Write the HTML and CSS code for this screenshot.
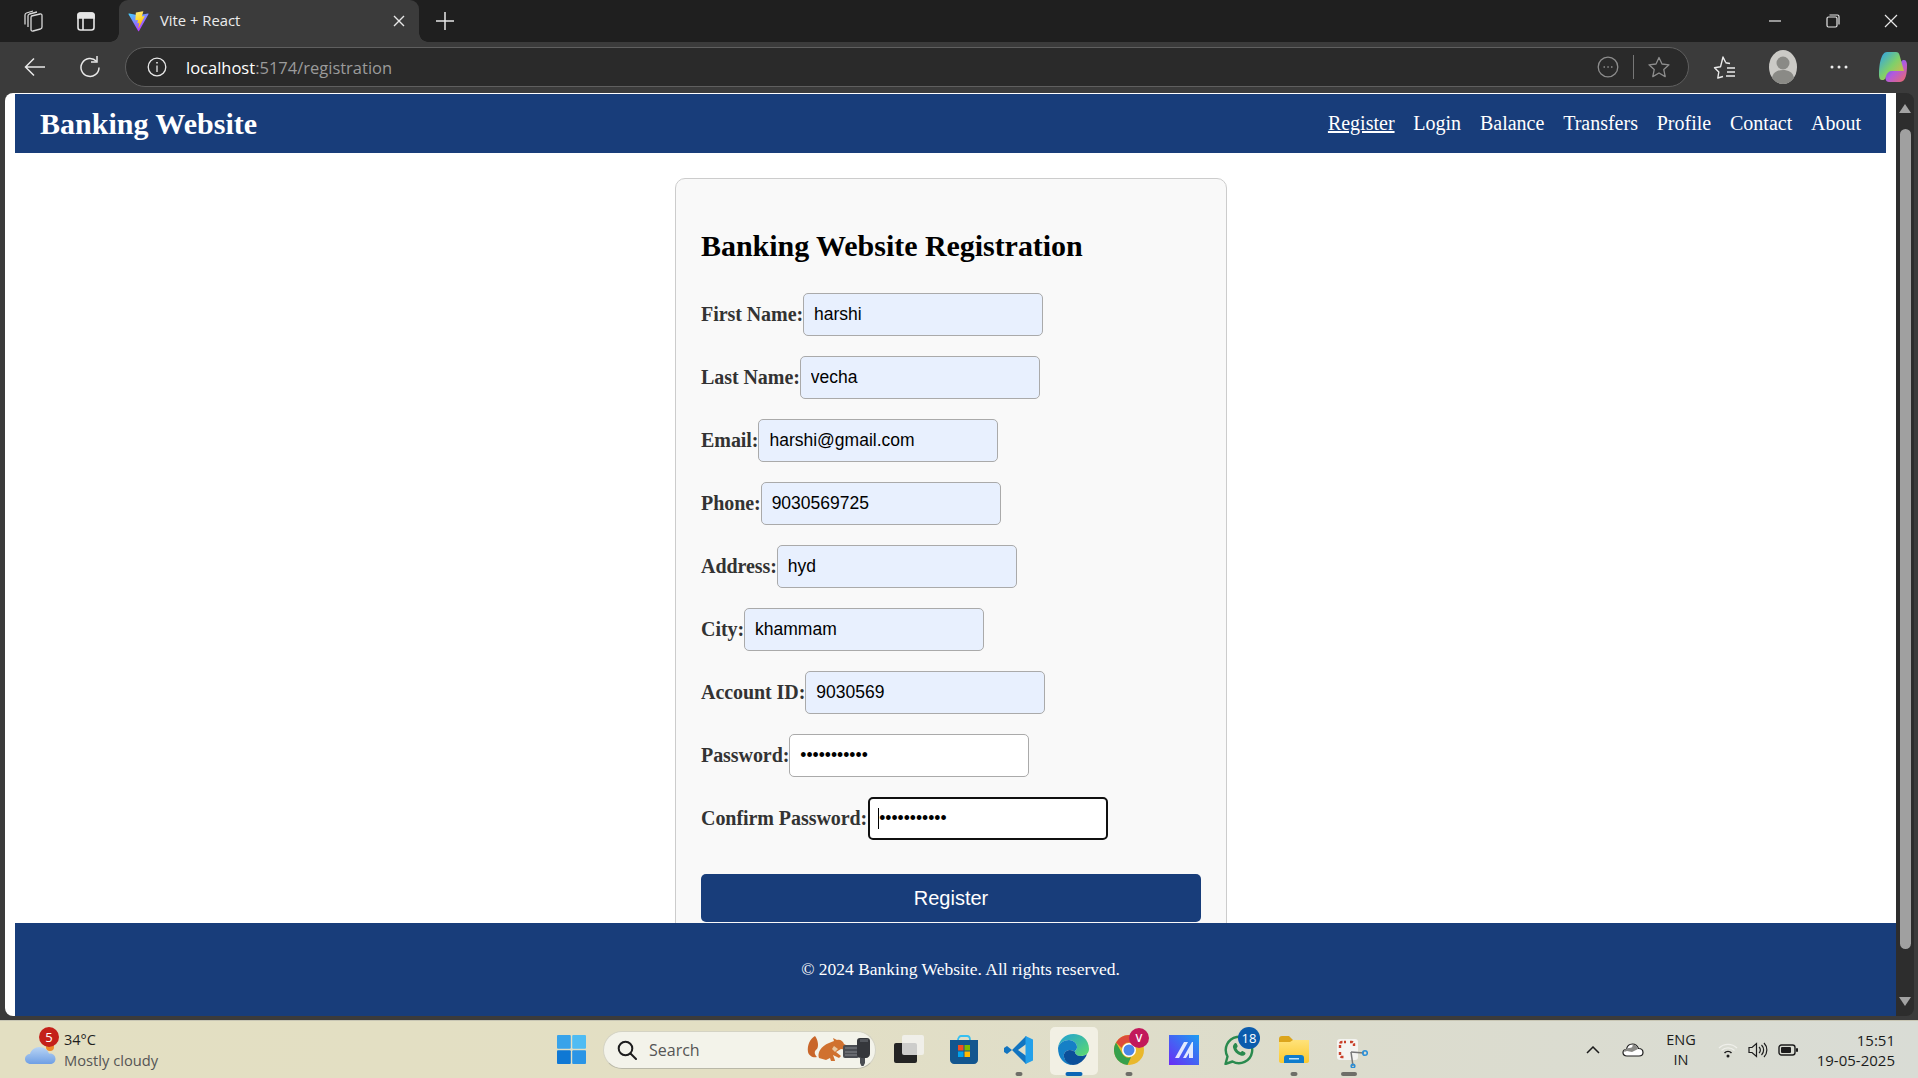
FILE: index.html
```html
<!DOCTYPE html>
<html lang="en">
<head>
<meta charset="utf-8">
<title>Vite + React</title>
<link rel="stylesheet" href="styles.css">
</head>
<body>
<svg class="defs" width="0" height="0" aria-hidden="true">
  <defs>
    <linearGradient id="viteA" x1="0" y1="0" x2="0.6" y2="1"><stop offset="0" stop-color="#41d1ff"/><stop offset="1" stop-color="#bd34fe"/></linearGradient>
    <linearGradient id="viteB" x1="0" y1="0" x2="0.3" y2="1"><stop offset="0" stop-color="#ffea83"/><stop offset="0.5" stop-color="#ffdd35"/><stop offset="1" stop-color="#ffa800"/></linearGradient>
    <linearGradient id="copA" x1="0" y1="0" x2="1" y2="1"><stop offset="0" stop-color="#2aa0f0"/><stop offset="0.5" stop-color="#7fd06a"/><stop offset="1" stop-color="#f0b040"/></linearGradient>
    <linearGradient id="copB" x1="0" y1="0" x2="1" y2="1"><stop offset="0" stop-color="#1e6fe0"/><stop offset="0.5" stop-color="#b05ae0"/><stop offset="1" stop-color="#f06a60"/></linearGradient>
    <linearGradient id="edgeA" x1="0" y1="0" x2="1" y2="1"><stop offset="0" stop-color="#1f9fd8"/><stop offset="1" stop-color="#5fdc6c"/></linearGradient>
    <linearGradient id="mA" x1="0" y1="1" x2="1" y2="0"><stop offset="0" stop-color="#6a2cf5"/><stop offset="1" stop-color="#1c9df2"/></linearGradient>
    <linearGradient id="cloudA" x1="0" y1="0" x2="0" y2="1"><stop offset="0" stop-color="#b8d4f4"/><stop offset="1" stop-color="#6f9fe4"/></linearGradient>
    <linearGradient id="folderA" x1="0" y1="0" x2="0" y2="1"><stop offset="0" stop-color="#ffe27a"/><stop offset="1" stop-color="#fbc92f"/></linearGradient>
  </defs>
</svg>

<header class="titlebar">
  <div class="tb-btn tb-btn-first">
    <svg width="24" height="24" viewBox="0 0 24 24" fill="none" stroke="#d8d8d8" stroke-width="1.300" stroke-linejoin="round"><path d="M10.500 7 19 5q2-.3 2 1.500V18q0 1.500-1.500 2L12 22q-2 .3-2-1.500V9q0-1.500.5-2Z"/><path d="M7 18V7q0-1.500 1.500-2L16 3"/><path d="M4 15.500V6q0-1.500 1.500-2L12 2"/></svg>
  </div>
  <div class="tb-btn">
    <svg width="20" height="22" viewBox="0 0 20 22" fill="none" stroke="#e6e6e6" stroke-width="1.600"><rect x="2" y="3" width="16" height="17" rx="2.500"/><path d="M7 8v12"/><path d="M2 8h16V5.500A2.500 2.500 0 0 0 15.500 3h-11A2.500 2.500 0 0 0 2 5.500Z" fill="#e6e6e6"/></svg>
  </div>
  <div class="tab">
    <svg class="fav" width="21" height="21" viewBox="0 0 410 404"><path fill="url(#viteA)" d="M399.641 59.5246L215.643 388.545C211.844 395.338 202.084 395.378 198.228 388.618L10.5817 59.5563C6.38087 52.1896 12.6802 43.2665 21.0281 44.7586L205.223 77.6824C206.398 77.8924 207.601 77.8904 208.776 77.6763L389.119 44.8058C397.439 43.2894 403.768 52.1434 399.641 59.5246Z"/><path fill="url(#viteB)" d="M292.965 1.5744L156.801 28.2552C154.563 28.6937 152.906 30.5903 152.771 32.8664L144.395 174.33C144.198 177.662 147.258 180.248 150.51 179.498L188.42 170.749C191.967 169.931 195.172 173.055 194.443 176.622L183.18 231.775C182.422 235.487 185.907 238.661 189.532 237.56L212.947 230.446C216.577 229.344 220.065 232.527 219.297 236.242L201.398 322.875C200.278 328.294 207.486 331.249 210.492 326.603L212.5 323.5L323.454 102.072C325.312 98.3645 322.108 94.137 318.036 94.9228L279.014 102.454C275.347 103.161 272.227 99.746 273.262 96.1583L298.731 7.86689C299.767 4.27314 296.636 0.855181 292.965 1.5744Z"/></svg>
    <span class="tab-title">Vite + React</span>
    <svg class="tab-close" width="12" height="12" viewBox="0 0 12 12" stroke="#e8e8e8" stroke-width="1.400"><path d="M1 1l10 10M11 1 1 11"/></svg>
  </div>
  <svg class="new-tab" width="18" height="18" viewBox="0 0 18 18" stroke="#e8e8e8" stroke-width="1.500"><path d="M9 0v18M0 9h18"/></svg>
  <div class="win-controls">
    <svg width="14" height="14" viewBox="0 0 14 14" stroke="#e8e8e8" stroke-width="1.200"><path d="M1 7h12"/></svg>
    <svg width="14" height="14" viewBox="0 0 14 14" fill="none" stroke="#e8e8e8" stroke-width="1.200"><rect x="1" y="3" width="10" height="10" rx="1.500"/><path d="M3.500 1H11.500A1.500 1.500 0 0 1 13 2.500V10.500"/></svg>
    <svg width="14" height="14" viewBox="0 0 14 14" stroke="#e8e8e8" stroke-width="1.200"><path d="M1 1l12 12M13 1 1 13"/></svg>
  </div>
</header>

<div class="toolbar">
  <svg class="tool-back" width="22" height="20" viewBox="0 0 22 20" fill="none" stroke="#e8e8e8" stroke-width="1.500"><path d="M21 10H1.500M10 1.500 1.500 10l8.500 8.500"/></svg>
  <svg class="tool-reload" width="22" height="24" viewBox="0 0 22 24" fill="none" stroke="#e8e8e8" stroke-width="1.500"><path d="M17.500 6.200A9 9 0 1 0 20 12.500"/><path d="M18 1v6h-6"/></svg>
  <div class="address">
    <svg class="addr-info" width="20" height="20" viewBox="0 0 20 20" fill="none" stroke="#e8e8e8" stroke-width="1.300"><circle cx="10" cy="10" r="8.800"/><path d="M10 8.500v6.500"/><path d="M10 5v1.600" stroke-width="1.600"/></svg>
    <span class="url"><span class="url-host">localhost</span>:5174/registration</span>
    <svg class="addr-more" width="22" height="22" viewBox="0 0 22 22" fill="none" stroke="#8d8d8d" stroke-width="1.300"><circle cx="11" cy="11" r="9.800"/><path d="M6.500 11h1.500M10.300 11h1.500M14 11h1.500" stroke-width="1.600"/></svg>
    <span class="addr-sep"></span>
    <svg class="addr-star" width="22" height="22" viewBox="0 0 22 22" fill="none" stroke="#8d8d8d" stroke-width="1.300"><path d="M11 1.500 14 8l7 .8-5.200 4.800 1.400 7L11 17l-6.200 3.600 1.400-7L1 8.800 8 8Z" stroke-linejoin="round"/></svg>
  </div>
  <svg class="tool-fav" width="24" height="24" viewBox="0 0 24 24" fill="none" stroke="#ececec" stroke-width="1.400"><path d="M10 21.500 4.800 23l1-6-4.300-4.300 6-.9L10 2l2.700 5.500" stroke-linejoin="round"/><path d="M12.500 7.800 17 8.500M14 13h8M14 17h8M13 21h9"/></svg>
  <svg class="tool-avatar" width="30" height="34" viewBox="0 0 30 34"><ellipse cx="15" cy="17" rx="14" ry="17" fill="#cbcac6"/><circle cx="15" cy="13" r="6.500" fill="#8a8a86"/><path d="M4 28c1-6 6-8 11-8s10 2 11 8c-3 4-7 6-11 6s-8-2-11-6Z" fill="#8a8a86"/></svg>
  <svg class="tool-dots" width="18" height="4" viewBox="0 0 18 4" fill="#ececec"><circle cx="2" cy="2" r="1.500"/><circle cx="9" cy="2" r="1.500"/><circle cx="16" cy="2" r="1.500"/></svg>
  <svg class="tool-copilot" width="30" height="32" viewBox="0 0 30 32"><path fill="url(#copB)" d="M22 31H11c-2 0-3-1-3.500-3L6 20h11c3 0 4-2 5-5l1-4c1-2 2-2 3-2 2 0 3 2 3 5 0 8-1 17-7 17Z"/><path fill="url(#copA)" d="M9 1h9c2 0 3 1 3.500 3L26 20H14c-3 0-5 2-6 5l-1 3c-1 1-2 1-3 1-2 0-3-2-3-5C1 14 3 1 9 1Z"/><path fill="#2d2d2d" opacity=".0" d="M0 0h1v1H0Z"/></svg>
</div>

<div class="viewport">
  <div class="page">
    <nav class="navbar">
      <span class="brand">Banking Website</span>
      <div class="nav-links">
        <a class="nav-link nav-active">Register</a>
        <a class="nav-link">Login</a>
        <a class="nav-link">Balance</a>
        <a class="nav-link">Transfers</a>
        <a class="nav-link">Profile</a>
        <a class="nav-link">Contact</a>
        <a class="nav-link">About</a>
      </div>
    </nav>
    <main class="main">
      <form class="card">
        <h2 class="card-title">Banking Website Registration</h2>
        <div class="row"><label class="label">First Name:</label><input class="input filled" value="harshi"></div>
        <div class="row"><label class="label">Last Name:</label><input class="input filled" value="vecha"></div>
        <div class="row"><label class="label">Email:</label><input class="input filled" value="harshi@gmail.com"></div>
        <div class="row"><label class="label">Phone:</label><input class="input filled" value="9030569725"></div>
        <div class="row"><label class="label">Address:</label><input class="input filled" value="hyd"></div>
        <div class="row"><label class="label">City:</label><input class="input filled" value="khammam"></div>
        <div class="row"><label class="label">Account ID:</label><input class="input filled" value="9030569"></div>
        <div class="row"><label class="label">Password:</label><input class="input" type="password" value="harshi12345"></div>
        <div class="row"><label class="label">Confirm Password:</label><span class="focus-wrap"><input class="input focused" type="password" value="harshi12345"><span class="caret"></span></span></div>
        <button class="submit" type="button">Register</button>
      </form>
    </main>
    <footer class="footer"><p class="footer-text">© 2024 Banking Website. All rights reserved.</p></footer>
  </div>
  <div class="scrollbar">
    <svg class="sb-up" width="12" height="9" viewBox="0 0 12 9" fill="#a3a3a3"><path d="M6 0l6 9H0Z"/></svg>
    <div class="sb-thumb"></div>
    <svg class="sb-down" width="12" height="9" viewBox="0 0 12 9" fill="#a3a3a3"><path d="M0 0h12L6 9Z"/></svg>
  </div>
</div>

<div class="taskbar">
  <div class="weather">
    <svg class="weather-icon" width="31" height="22" viewBox="0 0 31 22"><circle cx="25" cy="4" r="4" fill="#ef8a2a"/><path fill="url(#cloudA)" d="M6 21C2 21 0 18.500 0 16c0-3 2.500-5 5-5 1-4 5-7 9.500-7 5 0 8 3 9.500 6.500h1c3.500 0 5.500 2.500 5.500 5.500S28 21 25 21Z"/></svg>
    <span class="weather-badge">5</span>
    <div class="weather-text"><span class="weather-temp">34°C</span><span class="weather-desc">Mostly cloudy</span></div>
  </div>
  <div class="task-start">
    <svg width="29" height="29" viewBox="0 0 29 29"><rect x="0" y="0" width="13.800" height="13.800" rx="1" fill="#38a3ea"/><rect x="15.200" y="0" width="13.800" height="13.800" rx="1" fill="#4fbcf3"/><rect x="0" y="15.200" width="13.800" height="13.800" rx="1" fill="#0f78d4"/><rect x="15.200" y="15.200" width="13.800" height="13.800" rx="1" fill="#2a95e6"/></svg>
  </div>
  <div class="search">
    <svg class="search-icon" width="20" height="20" viewBox="0 0 20 20" fill="none" stroke="#1d1d1d" stroke-width="2"><circle cx="8.500" cy="8.500" r="6.800"/><path d="M13.500 13.500 19 19" stroke-linecap="round"/></svg>
    <span class="search-text">Search</span>
    <svg class="search-art" width="64" height="32" viewBox="0 0 64 32">
      <path fill="#c9662a" d="M8 2C3 5 0 11 1 18c1 4 5 6 9 5-3-3-3-6 0-8 2-3 1-9-2-13Z"/>
      <path fill="#d0712f" d="M12 24c-2-5 2-12 10-15l5-2-1-3 4 2c3-1 6 1 7 4l6 3-2 3-7-1-5 3 5 4-2 2-6-3c1 3 2 5 2 6h-4l-1-3-4 2Z"/>
      <path fill="#e9c7a0" d="M27 12l4 3-3 3-3-3Z"/>
      <rect x="36" y="11" width="16" height="13" rx="2" fill="#4a4d52"/>
      <path d="M38 14h13M38 18h13M38 21h13" stroke="#85888c" stroke-width="1"/>
      <path fill="#35373b" d="M50 7c0-2 1-3 3-3h7c2 0 3 1 3 3v13c0 2-2 4-4 4h-5c-2 0-4-1-4-3Z"/>
      <path fill="#53565b" d="M53 5h8v3h-8Z"/>
      <path fill="#4a4d52" d="M53 24h5v5l-1.500 3h-2L53 29Z"/>
    </svg>
  </div>
  <div class="task">
    <svg width="30" height="30" viewBox="0 0 30 30"><rect x="0" y="8" width="23" height="20" rx="2" fill="#242424"/><rect x="8" y="0" width="22" height="20" rx="2" fill="#f3f3f0" opacity=".82"/></svg>
  </div>
  <div class="task">
    <svg width="30" height="30" viewBox="0 0 30 30"><path d="M9 5c0-2.500 2-4 3-4h6c2 0 3 1.500 3 4" fill="none" stroke="#36c0f2" stroke-width="1.800"/><path fill="#13568f" d="M1 5h28v20c0 2-2 4-4 4H5c-2 0-4-2-4-4Z"/><rect x="9" y="10" width="5.500" height="5.500" fill="#f25022"/><rect x="15.500" y="10" width="5.500" height="5.500" fill="#7fba00"/><rect x="9" y="16.500" width="5.500" height="5.500" fill="#00a4ef"/><rect x="15.500" y="16.500" width="5.500" height="5.500" fill="#ffb900"/></svg>
  </div>
  <div class="task has-dot">
    <svg width="30" height="30" viewBox="0 0 30 30"><path fill="#1274c0" d="M22 1 8 15l-5-4-3 2v4l3 2 5-4 14 14 3-6-11-8 11-8Z"/><path fill="#23a0ea" d="M21.500 1 29 4.500v21L21.500 29Z"/><path fill="#0f6fb8" d="M21.500 8 12 15l9.500 7Z" opacity="0"/></svg>
  </div>
  <div class="task task-active has-bar">
    <svg width="31" height="31" viewBox="0 0 31 31"><path fill="url(#edgeA)" d="M15.500 0C23 0 31 5 31 15c0 4-3 7-8 7-3 0-6-1.500-6-4 0-2 2-2 2-5 0-4-4-7-8-7C6 6 1 9 0 14 1 6 7 0 15.500 0Z"/><path fill="#1580c6" d="M0 14c1-5 6-8 11-8 4 0 8 3 8 7 0 3-2 3-2 5-3-3-9-3-11 2-1 4 2 9 9 11C6 31 0 24 0 14Z"/><path fill="#0b4f99" d="M6 20c2-5 8-5 11-2 0 2.500 3 4 6 4 2 0 4-.5 6-2-2 6-8 11-14 11-7-1-10-7-9-11Z"/></svg>
  </div>
  <div class="task has-dot">
    <svg width="30" height="30" viewBox="0 0 30 30"><circle cx="15" cy="15" r="15" fill="#e9b82c"/><path fill="#dd4b39" d="M15 0a15 15 0 0 1 13 7.500H15A7.500 7.500 0 0 0 7.800 13L2 7.500A15 15 0 0 1 15 0Z"/><path fill="#36a04c" d="M2 7.500 8.500 19A7.500 7.500 0 0 0 17 22.300L13.500 30A15 15 0 0 1 2 7.500Z"/><circle cx="15" cy="15" r="7" fill="#fff"/><circle cx="15" cy="15" r="5.500" fill="#4a86e8"/></svg>
    <span class="badge badge-v">V</span>
  </div>
  <div class="task">
    <svg width="30" height="30" viewBox="0 0 30 30"><rect width="30" height="30" fill="url(#mA)"/><path fill="#fff" opacity=".85" d="M6 23 15 7h4L10 23ZM14 23l9-16h1v16h-4v-5l-3 5Z"/></svg>
  </div>
  <div class="task">
    <svg width="30" height="30" viewBox="0 0 30 30" fill="none"><path d="M1.500 29l2-7.500A13.200 13.200 0 1 1 8.500 26.500Z" stroke="#2a8a4e" stroke-width="2.400" stroke-linejoin="round"/><path fill="#2a8a4e" d="M10.500 8.500c1-.8 1.800-.5 2.300.5l.8 1.800c.2.600 0 1-.4 1.500l-.7.900c.8 1.800 2.200 3.200 4 4l1-.8c.5-.4 1-.5 1.500-.2l1.800 1c.8.500 1 1.200.3 2.200-1 1.300-2.600 1.800-4.400 1.200-4-1.300-6.800-4.300-7.700-8-.3-1.500.3-3 1.500-4.100Z"/></svg>
    <span class="badge badge-wa">18</span>
  </div>
  <div class="task has-dot">
    <svg width="30" height="27" viewBox="0 0 30 27"><path fill="#dca51c" d="M0 3c0-2 1-3 3-3h7l4 4h14v6H0Z"/><path fill="url(#folderA)" d="M0 6h11l3-2h16v21c0 1-1 2-2 2H2c-1 0-2-1-2-2Z"/><path fill="#0f7ccc" d="M5 27v-5c0-2 1-3 3-3h14c2 0 3 1 3 3v5Z"/><rect x="10" y="22" width="10" height="1.500" fill="#bfe3fa"/></svg>
  </div>
  <div class="task has-wide-dot">
    <svg class="snip" width="32" height="30" viewBox="0 0 32 30" fill="none"><rect x="1" y="1" width="21" height="21" rx="3" fill="#f4f4f1"/><path d="M4 10V6c0-1 1-2 2-2h4M14 4h2c1 0 2 1 2 2v2M4 14v3c0 1 1 2 2 2h2" stroke="#c9402a" stroke-width="2.400" stroke-dasharray="3 1.500"/><path d="M15 14 28 15" stroke="#777" stroke-width="1.500"/><path d="M15 14 17 28" stroke="#777" stroke-width="1.500"/><circle cx="29" cy="15" r="2.300" stroke="#2a8fd8" stroke-width="1.600"/><circle cx="17" cy="28" r="1.800" stroke="#2a8fd8" stroke-width="1.600"/></svg>
  </div>
  <div class="tray">
    <svg class="tray-chev" width="14" height="8" viewBox="0 0 14 8" fill="none" stroke="#1c1c1c" stroke-width="1.500"><path d="M1 7l6-6 6 6"/></svg>
    <svg class="tray-cloud" width="22" height="14" viewBox="0 0 22 14"><path fill="#fff" stroke="#1c1c1c" stroke-width="1.200" d="M5 13C2.500 13 1 11.500 1 9.500S2.500 6.500 4.500 6.500C5 3 7.500 1 10.500 1c3 0 5 2 6 4.500 2.500 0 4.500 1.500 4.500 4S19 13 17 13Z"/><path fill="#8a8a86" d="M2 9C3 6 5 5 7 5c3 0 4-1 3.500-3.500C13 1.500 15.500 3 16 6L10 9 5 8Z"/></svg>
    <div class="tray-lang"><span>ENG</span><span>IN</span></div>
    <svg class="tray-wifi" width="20" height="16" viewBox="0 0 20 16" fill="none" stroke="#fff" stroke-width="1.300"><path d="M1 6a13 13 0 0 1 18 0" stroke="#efefea"/><path d="M3.500 8.500a9.500 9.500 0 0 1 13 0" stroke="#efefea"/><path d="M6.500 11a5 5 0 0 1 7 0" stroke="#1c1c1c" stroke-width="1.500"/><circle cx="10" cy="14" r="1.500" fill="#1c1c1c" stroke="none"/></svg>
    <svg class="tray-sound" width="20" height="16" viewBox="0 0 20 16" fill="none" stroke="#1c1c1c" stroke-width="1.200"><path d="M1 5.500h3L8.500 1.500v13L4 10.500H1Z"/><path d="M11 5a4 4 0 0 1 0 6M13.500 3a7 7 0 0 1 0 10M16 1a10 10 0 0 1 0 14"/></svg>
    <svg class="tray-batt" width="20" height="12" viewBox="0 0 20 12"><rect x="1" y="1" width="16" height="10" rx="2.500" fill="none" stroke="#1c1c1c" stroke-width="1.400"/><rect x="3" y="3" width="10" height="6" rx="1" fill="#1c1c1c"/><rect x="18" y="4" width="2" height="4" rx="1" fill="#1c1c1c"/></svg>
    <div class="tray-clock"><span>15:51</span><span>19-05-2025</span></div>
  </div>
</div>
</body>
</html>
```

FILE: styles.css
```css
* { box-sizing: border-box; }
html, body { margin: 0; height: 100%; }
body {
  width: 1918px;
  height: 1078px;
  overflow: hidden;
  display: flex;
  flex-direction: column;
  background: #3b3b3b;
  font-family: "Open Sans", "Noto Sans", sans-serif;
}
.defs { position: absolute; }

/* browser chrome */
.titlebar {
  height: 42px;
  flex: none;
  background: #1f1f1f;
  display: flex;
  align-items: center;
}
.tb-btn { width: 53px; display: flex; justify-content: center; flex: none; }
.tb-btn-first { margin-left: 6px; }
.tab {
  position: relative;
  width: 300px;
  height: 42px;
  margin-left: 7px;
  flex: none;
  background: #3b3b3b;
  border-radius: 9px 9px 0 0;
  display: flex;
  align-items: center;
  padding: 0 14px 0 9px;
}
.tab::before, .tab::after {
  content: "";
  position: absolute;
  bottom: 0;
  width: 9px;
  height: 9px;
}
.tab::before { left: -9px; background: radial-gradient(circle at 0 0, #1f1f1f 8.500px, #3b3b3b 9px); }
.tab::after { right: -9px; background: radial-gradient(circle at 100% 0, #1f1f1f 8.500px, #3b3b3b 9px); }
.fav { flex: none; }
.tab-title { margin-left: 11px; margin-bottom: 2px; font-size: 14.800px; color: #ececec; flex: 1; }
.new-tab { margin-left: 17px; flex: none; }
.win-controls {
  margin-left: auto;
  margin-right: 20px;
  display: flex;
  gap: 44px;
}
.toolbar {
  height: 51px;
  flex: none;
  background: #3b3b3b;
  display: flex;
  align-items: center;
  padding-bottom: 1px;
}
.tool-back { margin-left: 24px; flex: none; }
.tool-reload { margin-left: 33px; flex: none; }
.address {
  width: 1564px;
  height: 40px;
  margin-left: 24px;
  flex: none;
  background: #2a2a2a;
  border: 1.500px solid #5f5f5f;
  border-radius: 20px;
  display: flex;
  align-items: center;
  padding-left: 21px;
}
.addr-info { flex: none; }
.url { margin-left: 19px; font-size: 16.500px; color: #9b9b9b; flex: 1; }
.url-host { color: #fff; }
.addr-more { flex: none; }
.addr-sep { width: 1.500px; height: 24px; background: #777; margin: 0 14px 0 14px; flex: none; }
.addr-star { flex: none; margin-right: 18px; }
.tool-fav { margin-left: 24px; flex: none; }
.tool-avatar { margin-left: 31px; flex: none; }
.tool-dots { margin-left: 32px; flex: none; }
.tool-copilot { margin-left: 30px; flex: none; }

/* page */
.viewport {
  height: 923px;
  flex: none;
  display: flex;
  padding-left: 5px;
  padding-right: 4px;
}
.page {
  flex: 1;
  min-width: 0;
  background: #fff;
  border-radius: 8px 0 0 8px;
  overflow: hidden;
  display: flex;
  flex-direction: column;
  padding: 1px 0 0 10px;
  font-family: "Liberation Serif", "Times New Roman", serif;
}
.navbar {
  height: 59px;
  flex: none;
  margin-right: 10px;
  background: #183d7a;
  color: #fff;
  display: flex;
  align-items: center;
  justify-content: space-between;
  padding: 0 25px;
}
.brand { font-size: 30px; font-weight: 700; }
.nav-links { display: flex; gap: 18.800px; }
.nav-link { font-size: 20px; color: #fff; }
.nav-active { text-decoration: underline; }
.main {
  flex: 1;
  min-height: 0;
  overflow: hidden;
  padding: 25px 0 0 660px;
}
.card {
  width: 552px;
  min-height: 800px;
  background: #f9f9f9;
  border: 1px solid #ccc;
  border-radius: 10px;
  padding: 25px;
}
.card-title {
  margin: 25px 0 30px;
  font-size: 30px;
  line-height: 34px;
  font-weight: 700;
  color: #000;
  letter-spacing: -0.04px;
}
.row { display: flex; align-items: center; height: 43px; margin-bottom: 20px; }
.label { font-size: 20px; font-weight: 700; color: #333; white-space: nowrap; letter-spacing: -0.06px; }
.input {
  width: 240px;
  height: 43px;
  padding: 10px;
  border: 1px solid #aaa;
  border-radius: 5px;
  background: #fff;
  color: #000;
  font-family: "Liberation Sans", Arial, sans-serif;
  font-size: 17.500px;
  outline: none;
}
.filled { background: #e8f0fe; }
.focus-wrap { position: relative; display: block; height: 43px; margin-left: 1px; }
.focused { border: 2.500px solid #101010; padding: 10px 9px; }
.caret {
  position: absolute;
  left: 10px;
  top: 11px;
  width: 1px;
  height: 21px;
  background: #000;
}
.submit {
  display: block;
  width: 100%;
  height: 48px;
  margin-top: 34px;
  border: 0;
  border-radius: 5px;
  background: #183d7a;
  color: #fff;
  font-family: "Liberation Sans", Arial, sans-serif;
  font-size: 20px;
}
.footer {
  height: 93px;
  flex: none;
  background: #183d7a;
  display: flex;
  align-items: center;
  justify-content: center;
  padding-left: 10px;
}
.footer-text { margin: 0; font-size: 17.500px; color: #fff; }

/* scrollbar */
.scrollbar {
  width: 18px;
  flex: none;
  background: #2d2d2d;
  border-radius: 0 8px 8px 0;
  display: flex;
  flex-direction: column;
  align-items: center;
  padding-top: 11px;
}
.sb-thumb {
  width: 11px;
  height: 820px;
  margin: 16px 0 48px;
  background: #a0a0a0;
  border-radius: 6px;
  flex: none;
}
.sb-up, .sb-down { flex: none; }

/* taskbar */
.taskbar {
  margin-top: 4px;
  height: 58px;
  flex: none;
  background: linear-gradient(90deg, #e3dfc2 0%, #e3dfc4 40%, #dcdccd 70%, #d9dcd5 100%);
  border-top: 1px solid #c8c6b4;
  display: flex;
  align-items: center;
  color: #1c1c1c;
}
.weather {
  position: relative;
  width: 544px;
  flex: none;
  padding-left: 25px;
  display: flex;
  align-items: center;
  gap: 8px;
}
.weather-icon { flex: none; margin-top: 9px; }
.weather-badge {
  position: absolute;
  left: 39px;
  top: -3px;
  width: 20px;
  height: 20px;
  border-radius: 50%;
  background: #c4201a;
  color: #fff;
  font-size: 13px;
  line-height: 20px;
  text-align: center;
}
.weather-text { display: flex; flex-direction: column; }
.weather-temp { font-size: 14.500px; line-height: 20px; color: #1f1f1f; }
.weather-desc { font-size: 14.700px; line-height: 20px; color: #555; }
.task-start { width: 55px; flex: none; display: flex; justify-content: center; }
.search {
  width: 273px;
  height: 38px;
  margin-left: 4px;
  margin-right: 5px;
  flex: none;
  background: #f3f3ea;
  border: 1px solid #d4d3c4;
  border-bottom-color: #b9b8a8;
  border-radius: 19px;
  display: flex;
  align-items: center;
  padding-left: 13px;
}
.search-icon { flex: none; }
.search-text { margin-left: 12px; font-size: 16px; color: #555; }
.search-art { margin-left: auto; margin-right: 4px; flex: none; }
.task {
  position: relative;
  width: 55px;
  height: 58px;
  flex: none;
  display: flex;
  align-items: center;
  justify-content: center;
}
.task-active::before {
  content: "";
  position: absolute;
  left: 3.500px;
  top: 6px;
  width: 48px;
  height: 48px;
  background: #f2f0e4;
  border-radius: 5px;
}
.task-active svg { position: relative; }
.has-dot::after, .has-wide-dot::after, .has-bar::after {
  content: "";
  position: absolute;
  bottom: 3px;
  left: 50%;
  transform: translateX(-50%);
  width: 7px;
  height: 4px;
  border-radius: 2px;
  background: #6e6e68;
}
.has-wide-dot::after { width: 16px; }
.has-bar::after { width: 17px; bottom: 3px; background: #0a66b5; }
.snip { margin-top: 6px; margin-left: 6px; }
.badge {
  position: absolute;
  border-radius: 50%;
  color: #fff;
  text-align: center;
}
.badge-v {
  left: 28px;
  top: 7px;
  width: 20px;
  height: 20px;
  line-height: 20px;
  font-size: 11px;
  font-weight: 600;
  background: #c2185b;
}
.badge-wa {
  left: 27px;
  top: 6px;
  width: 22px;
  height: 22px;
  line-height: 22px;
  font-size: 13px;
  background: #0b5cad;
}
.tray {
  margin-left: auto;
  margin-right: 23px;
  display: flex;
  align-items: center;
  flex: none;
}
.tray-lang {
  width: 40px;
  margin-left: 17px;
  display: flex;
  flex-direction: column;
  align-items: center;
  font-size: 14.500px;
  line-height: 20px;
}
.tray-chev { flex: none; }
.tray-cloud { margin-left: 22px; flex: none; }
.tray-wifi { margin-left: 17px; flex: none; }
.tray-sound { margin-left: 10px; flex: none; }
.tray-batt { margin-left: 10px; flex: none; }
.tray-clock {
  margin-left: 20px;
  width: 77px;
  display: flex;
  flex-direction: column;
  align-items: flex-end;
  font-size: 15px;
  line-height: 20px;
  white-space: nowrap;
}
```
